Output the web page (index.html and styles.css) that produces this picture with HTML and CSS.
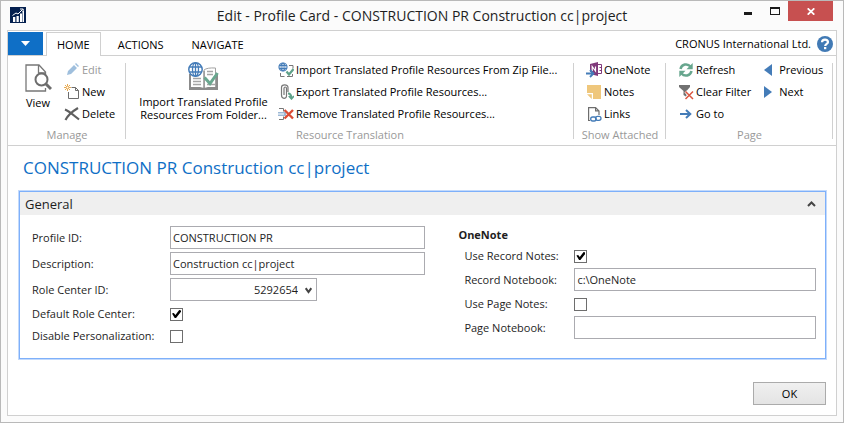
FILE: index.html
```html
<!DOCTYPE html>
<html lang="en">
<head>
<meta charset="utf-8">
<meta name="viewport" content="width=device-width, initial-scale=1">
<title>Edit - Profile Card - CONSTRUCTION PR Construction cc|project</title>
<link rel="stylesheet" href="styles.css">
</head>
<body>
<div class="window">
  <header class="titlebar">
    <svg class="app-icon" viewBox="0 0 16 16" aria-hidden="true"><path fill="#04204f" d="M0 0h16v16H0z"/><path fill="#fff" d="M3 10h2.300v5H3zM6.500 9h2.300v6H6.500zM10 6.500h2v8.500h-2zM12.500 4h1.500v11h-1.500z"/><path fill="none" stroke="#fff" stroke-width="1" d="M2.500 8.500 6 6l2 1 4.500-4.500M10 2h3.200v3"/></svg>
    <h1 class="window-title">Edit - Profile Card - CONSTRUCTION PR Construction cc|project</h1>
    <div class="window-buttons">
      <button type="button" class="win-btn" aria-label="Minimize"><svg width="10" height="10" viewBox="0 0 10 10"><path fill="#1a1a1a" d="M1 6h8v3H1z"/></svg></button>
      <button type="button" class="win-btn" aria-label="Maximize"><svg width="10" height="8" viewBox="0 0 10 8"><path fill="#1a1a1a" fill-rule="evenodd" d="M0 0h10v8H0zM1 2v5h8V2z"/></svg></button>
      <button type="button" class="win-btn win-close" aria-label="Close"><svg width="8" height="7" viewBox="0 0 8 7"><path stroke="#fff" stroke-width="1.700" d="m.7.300 6.600 6.400M7.300.3.700 6.700"/></svg></button>
    </div>
  </header>

  <main class="frame">
    <nav class="tabs">
      <button type="button" class="app-menu" aria-label="Application menu"><svg width="9" height="5" viewBox="0 0 9 5"><path fill="#fff" d="M0 0h9L4.500 5z"/></svg></button>
      <button type="button" class="tab tab-active">HOME</button>
      <button type="button" class="tab">ACTIONS</button>
      <button type="button" class="tab">NAVIGATE</button>
      <span class="company">CRONUS International Ltd.</span>
      <button type="button" class="help" aria-label="Help"><svg width="16" height="16" viewBox="0 0 16 16"><circle cx="8" cy="8" r="8" fill="#417ab5"/><path fill="none" stroke="#fff" stroke-width="2.200" d="M5 6.300C5 2.700 11 2.900 11 6c0 1.900-2.800 1.900-2.800 4"/><path fill="#fff" d="M7 11h2.300v2.200H7z"/></svg></button>
    </nav>

    <div class="ribbon">
      <section class="group">
        <div class="group-body">
          <button type="button" class="big view">
            <svg width="27" height="28" viewBox="0 0 27 28"><path fill="#fff" stroke="#777" stroke-width="1.300" d="M20.500 13V8L14 1H1v26h19.500v-3M13.500 1v8h7"/><circle cx="16.500" cy="15.500" r="6" fill="#fff" stroke="#6d6d6d" stroke-width="2"/><path stroke="#6d6d6d" stroke-width="3" d="m21 20 5 5"/></svg>
            <span>View</span>
          </button>
          <div class="stack">
            <button type="button" class="cmd" disabled><svg width="16" height="16" viewBox="0 0 16 16"><path fill="#9fbfdd" d="m3 13 1-4 6-6 3 3-6 6zM11 2l1-1 3 3-1 1z"/></svg>Edit</button>
            <button type="button" class="cmd"><svg width="16" height="16" viewBox="0 0 16 16"><path fill="#fff" stroke="#6d6d6d" d="M7.500 3.500h4l3 3v8h-10V8M11.500 3.500v3h3"/><path stroke="#e8aa50" d="M3.500 0v7M0 3.500h7M1 1l5 5M6 1 1 6"/><circle cx="3.500" cy="3.500" r="1" fill="#fff"/></svg>New</button>
            <button type="button" class="cmd"><svg width="16" height="16" viewBox="0 0 16 16"><path fill="none" stroke="#5f5f5f" stroke-width="2.200" d="M1 3.500c4 1.500 9 6 14 10M14 2C9 5 4 9 1.500 14"/></svg>Delete</button>
          </div>
        </div>
        <h2 class="group-name">Manage</h2>
      </section>

      <section class="group">
        <div class="group-body">
          <button type="button" class="big import">
            <svg width="31" height="29" viewBox="0 0 31 29"><path fill="#fff" stroke="#a2a2a2" d="M16 26V8q3-2.500 11.500-2v20M2 12v14"/><path fill="#8b8b8b" d="M1 25h11l4 1 4-1h10v3H1zM1 12h2v14H1zM28 12h2v14h-2zM15.500 9h1.200v18h-1.200z"/><path stroke="#a5a5a5" stroke-width="1.300" d="M5 16.500h8M5 19.500h8M5 22.500h8M19 9.500h6M19 12.500h6M19 22.500h8"/><circle cx="7.500" cy="7.500" r="6.700" fill="#fff" stroke="#447cb8" stroke-width="1.500"/><ellipse cx="7.500" cy="7.500" rx="3" ry="6.700" fill="none" stroke="#447cb8" stroke-width="1.300"/><path stroke="#447cb8" stroke-width="1.300" d="M7.500 1v13M1.500 5h12M1.500 10h12"/><path fill="none" stroke="#69a78f" stroke-width="3" d="m16.500 15.500 5.500 6 7.500-10.500"/></svg>
            <span>Import Translated Profile<br>Resources From Folder...</span>
          </button>
          <div class="stack">
            <button type="button" class="cmd"><svg width="16" height="16" viewBox="0 0 16 16"><path fill="none" stroke="#777" d="M2.500 11v3.500h4M11 3.500h4v3M9 14.500h5.500V12M3 14.500h3"/><circle cx="5" cy="5" r="4" fill="#fff" stroke="#447cb8" stroke-width="1.200"/><path fill="none" stroke="#447cb8" d="M5 1v8M1 3.500h8M1 6.500h8"/><ellipse cx="5" cy="5" rx="2" ry="4" fill="none" stroke="#447cb8"/><path fill="none" stroke="#5fa189" stroke-width="2.200" d="m8.500 9.500 2.500 3 4.500-5.500"/></svg>Import Translated Profile Resources From Zip File...</button>
            <button type="button" class="cmd"><svg width="16" height="16" viewBox="0 0 16 16"><path fill="none" stroke="#777" stroke-width="1.200" d="M10 8V3.500C10 0 3.500 0 3.500 3.500V11c0 4.500 5 4 5 1V4.500c0-2-2.500-2-2.500 0V11"/><path fill="none" stroke="#5fa189" stroke-width="1.800" d="M10 9.500c3 0 3.500 2 3.500 5M10.800 12l2.700 2.800 2.500-2.800"/></svg>Export Translated Profile Resources...</button>
            <button type="button" class="cmd"><svg width="16" height="16" viewBox="0 0 16 16"><path fill="none" stroke="#777" d="M1 2.500h4.500v3M1 13.500h4.500v-3"/><path fill="#9db9d6" d="M0 6h8v4H0z"/><path stroke="#fff" d="M0 8h6"/><path stroke="#db4c35" stroke-width="2.400" d="m6.500 4 8.500 8.500M15 4l-8.500 8.500"/></svg>Remove Translated Profile Resources...</button>
          </div>
        </div>
        <h2 class="group-name">Resource Translation</h2>
      </section>

      <section class="group">
        <div class="group-body">
          <div class="stack">
            <button type="button" class="cmd"><svg width="16" height="16" viewBox="0 0 16 16"><path fill="#80397b" d="m4 2 8-2v14l-8-2z"/><path fill="none" stroke="#80397b" d="M12 2.500h3.500v9H12M13.500 5.500h2M13.500 8.500h2"/><path fill="none" stroke="#fff" stroke-width="1.200" d="M6.200 9V4.500L9.500 9V4.500"/><path fill="none" stroke="#fff" stroke-width="3" d="M0 11.500h7"/><path fill="none" stroke="#447cb8" stroke-width="1.800" d="M0 11.500h7M4 8l3.500 3.500L4 15"/></svg>OneNote</button>
            <button type="button" class="cmd"><svg width="16" height="16" viewBox="0 0 16 16"><path fill="#efc77c" d="M1 1h14v14H7V9H1zM1 10.200h4.800V15z"/></svg>Notes</button>
            <button type="button" class="cmd"><svg width="16" height="16" viewBox="0 0 16 16"><path fill="none" stroke="#6d6d6d" stroke-width="1.200" d="M4 14.500H2.600V1.600h7l3.400 3.300V9M9.600 1.600v3.300H13"/><g fill="none" stroke="#447cb8" stroke-width="1.300"><rect x="4.700" y="11" width="5.500" height="4" rx="2"/><rect x="9.500" y="10.300" width="5.500" height="4" rx="2"/></g></svg>Links</button>
          </div>
        </div>
        <h2 class="group-name">Show Attached</h2>
      </section>

      <section class="group">
        <div class="group-body">
          <div class="stack">
            <button type="button" class="cmd"><svg width="16" height="16" viewBox="0 0 16 16"><path fill="none" stroke="#67a68e" stroke-width="2.500" d="M2.500 7C3.500 2 9.500 1 12.500 4.500M13.500 9c-1 5-7 6-10 2.500"/><path fill="#67a68e" d="M14.700 1v6.300H8.500zM1.300 15V8.700h6.200z"/></svg>Refresh</button>
            <button type="button" class="cmd"><svg width="16" height="16" viewBox="0 0 16 16"><path fill="#717171" d="M1 1h11v2L8.500 7v6l-3-2V7L1 3z"/><path stroke="#fff" stroke-width="3" d="m7.500 7.500 7.500 7.500M15 7.500 7.500 15"/><path stroke="#db5640" stroke-width="1.500" d="m7.500 7.500 7.500 7.500M15 7.500 7.500 15"/></svg>Clear Filter</button>
            <button type="button" class="cmd"><svg width="16" height="16" viewBox="0 0 16 16"><path fill="none" stroke="#447cb8" stroke-width="2" d="M2 8h10M8 4l4.300 4L8 12"/></svg>Go to</button>
          </div>
          <div class="stack paging">
            <button type="button" class="cmd"><svg width="16" height="16" viewBox="0 0 16 16"><path fill="#447cb8" d="M9 2v12L1 8z"/></svg>Previous</button>
            <button type="button" class="cmd"><svg width="16" height="16" viewBox="0 0 16 16"><path fill="#447cb8" d="M1 2v12l8-6z"/></svg>Next</button>
          </div>
        </div>
        <h2 class="group-name">Page</h2>
      </section>
    </div>

    <form class="page">
      <h2 class="page-title">CONSTRUCTION PR Construction cc|project</h2>
      <section class="panel">
        <header class="panel-head">
          <h3 class="panel-name">General</h3>
          <button type="button" class="collapse" aria-label="Collapse"><svg width="9" height="6" viewBox="0 0 9 6"><path fill="none" stroke="#444" stroke-width="2" d="m1 5 3.500-3.500L8 5"/></svg></button>
        </header>
        <div class="panel-body">
          <div class="column">
            <div class="row"><label for="profile">Profile ID:</label><input class="text" id="profile" type="text" value="CONSTRUCTION PR"></div>
            <div class="row"><label for="description">Description:</label><input class="text" id="description" type="text" value="Construction cc|project"></div>
            <div class="row"><label for="role">Role Center ID:</label><span class="picker"><select class="text" id="role"><option>5292654</option></select><svg class="chevron" width="7" height="7" viewBox="0 0 7 7" aria-hidden="true"><path fill="none" stroke="#444" stroke-width="2" d="M.7 1.200 3.500 5l2.800-3.800"/></svg></span></div>
            <div class="row check-row"><label for="default-role">Default Role Center:</label><input class="check" id="default-role" type="checkbox" checked></div>
            <div class="row check-row"><label for="disable-pers">Disable Personalization:</label><input class="check" id="disable-pers" type="checkbox"></div>
          </div>
          <div class="column notes">
            <h4 class="column-name">OneNote</h4>
            <div class="row check-row"><label for="record-notes">Use Record Notes:</label><input class="check" id="record-notes" type="checkbox" checked></div>
            <div class="row"><label for="record-book">Record Notebook:</label><input class="text" id="record-book" type="text" value="c:\OneNote"></div>
            <div class="row check-row"><label for="page-notes">Use Page Notes:</label><input class="check" id="page-notes" type="checkbox"></div>
            <div class="row"><label for="page-book">Page Notebook:</label><input class="text" id="page-book" type="text"></div>
          </div>
        </div>
      </section>
      <footer class="actions"><button type="button" class="ok">OK</button></footer>
    </form>
  </main>
</div>
</body>
</html>
```
FILE: styles.css
```css
* { box-sizing: border-box; }

body {
  margin: 0;
  background: #fff;
  color: #1e1e1e;
  font: 11px/16px "Open Sans", "Noto Sans", sans-serif;
}

h1, h2, h3, h4 { margin: 0; font-weight: 400; }

button, input, select { font: inherit; color: inherit; }

button { padding: 0; border: 0; background: none; white-space: nowrap; }

svg { display: block; flex: none; }

.window {
  display: flex;
  flex-direction: column;
  min-height: 100vh;
  padding: 0 6px 6px;
  border: 1px solid #b9b9b9;
  background: #fbfbfb;
}

.titlebar {
  display: grid;
  grid-template-columns: 120px 1fr 120px;
  height: 29px;
}

.app-icon { width: 16px; height: 16px; margin: 6px 0 0 3px; }

.window-title { font-size: 14px; line-height: 30px; text-align: center; white-space: nowrap; }

.window-buttons { display: flex; justify-content: flex-end; padding-right: 4px; }

.win-btn { display: grid; place-items: center; width: 27px; height: 20px; }
.win-close { width: 45px; background: #c75050; }

.frame {
  display: flex;
  flex: 1;
  flex-direction: column;
  border: 1px solid #d0d0d0;
  background: #fff;
}

.tabs { display: flex; height: 24px; padding: 1px 3px 0 0; }

.app-menu { display: grid; place-items: center; width: 35px; height: 23px; background: #0f6fc6; }

.tab { height: 24px; padding: 0 13px; border: 1px solid transparent; border-bottom: 0; color: #000; }
.tab-active { z-index: 1; margin: 0 3px; padding: 0 10px; border-color: #d0d0d0; background: #fff; }

.company { margin: 4px 6px 0 auto; color: #000; }
.help { align-self: flex-start; margin-top: 4px; }

.ribbon {
  display: grid;
  grid-template-columns: 118fr 448fr 92fr 167fr 3fr;
  border: solid #d0d0d0;
  border-width: 1px 0;
  padding-top: 3px;
}

.group {
  min-width: 0;
  background: linear-gradient(#d0d0d0, #d0d0d0) right 4px / 1px 76px no-repeat;
}

.group-body { display: flex; height: 66px; padding-left: 12px; }

.group-name { color: #999; font-size: 11px; line-height: 20px; text-align: center; white-space: nowrap; }

.stack { display: flex; flex-direction: column; align-items: flex-start; }

.cmd { display: flex; align-items: center; gap: 2px; height: 22px; color: #000; }
.cmd:disabled { color: #999; }

.paging { margin-left: 12px; }
.paging .cmd { gap: 0; }

.big { display: flex; flex-direction: column; align-items: center; gap: 4px; padding-top: 3px; color: #000; line-height: 13px; }
.view { width: 36px; margin-right: 8px; padding-top: 5px; }
.import { width: 131px; margin-right: 9px; }

.page { padding: 10px 10px 9px 11px; }

.page-title { margin: 0 4px 11px; color: #0f6fc6; font-size: 17px; line-height: 24px; }

.panel { border: 1px solid #7eb0fa; outline: 1px solid #c3dafc; background: #fff; }

.panel-head { display: flex; align-items: center; justify-content: space-between; height: 23px; padding: 0 9px 0 5px; background: #efefef; }

.panel-name { font-size: 13px; }

.panel-body { display: grid; grid-template-columns: 11fr 10fr; gap: 33px; padding: 10px 9px 11px 12px; }

.row { display: flex; align-items: center; height: 26px; padding: 1px 0 2px; }
.row label { flex: none; width: 138px; white-space: nowrap; }
.check-row { height: 22px; padding: 0; }

.notes .row label { width: 116px; padding-left: 6px; }

.column-name { font-weight: 700; line-height: 20px; }

.text { flex: 1; min-width: 0; height: 23px; padding: 0 2px; border: 1px solid #ababb0; border-radius: 0; background: #fff; }

.picker { display: flex; position: relative; width: 147px; }

select.text { appearance: none; padding-right: 18px; text-align-last: right; }

.chevron { position: absolute; top: 9px; right: 5px; pointer-events: none; }

.check { appearance: none; display: grid; place-items: center; width: 13px; height: 13px; margin: 0; border: 1px solid #6e6e6e; background: #fff; }

.check:checked::before {
  content: "";
  width: 9px;
  height: 9px;
  background: #000;
  clip-path: polygon(0 45%, 20% 40%, 38% 60%, 80% 5%, 100% 10%, 100% 25%, 45% 95%, 30% 95%);
}

.actions { display: flex; justify-content: flex-end; padding-top: 23px; }

.ok { width: 73px; height: 23px; border: 1px solid #ababab; background: linear-gradient(#f0f0f0, #e4e4e4); color: #000; }
```
